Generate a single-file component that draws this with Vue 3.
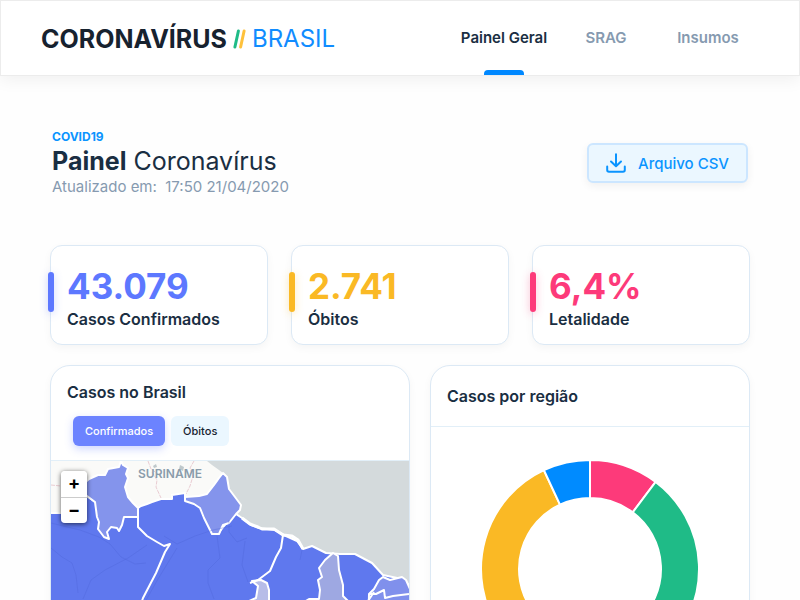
<script setup>
import { ref, computed } from 'vue'

const tabs = ['Painel Geral', 'SRAG', 'Insumos']
const activeTab = ref('Painel Geral')

const stats = [
  { value: '43.079', label: 'Casos Confirmados', tone: 'indigo' },
  { value: '2.741', label: 'Óbitos', tone: 'amber' },
  { value: '6,4%', label: 'Letalidade', tone: 'pink' },
]

const layers = ['Confirmados', 'Óbitos']
const activeLayer = ref('Confirmados')

// Start and end angles in degrees, clockwise from the top.
const regions = [
  { color: '#fd3a7a', from: 0, to: 37 },
  { color: '#1fbb87', from: 37, to: 138 },
  { color: '#fab925', from: 138, to: 335 },
  { color: '#008bff', from: 335, to: 360 },
]

const point = (radius, angle) => {
  const rad = (angle * Math.PI) / 180
  return `${(110 + radius * Math.sin(rad)).toFixed(2)} ${(110 - radius * Math.cos(rad)).toFixed(2)}`
}

const slices = computed(() =>
  regions.map(({ color, from, to }) => {
    const large = to - from > 180 ? 1 : 0
    return {
      color,
      d: `M${point(109, from)}A109 109 0 ${large} 1 ${point(109, to)}L${point(71, to)}A71 71 0 ${large} 0 ${point(71, from)}Z`,
    }
  }),
)
</script>

<template>
  <div class="page">
    <header class="topbar">
      <a class="logo" href="#">
        <span class="logo-strong">CORONAVÍRUS</span>
        <svg class="logo-mark" viewBox="0 0 13 20" aria-hidden="true">
          <path d="M5.4 2 1.9 18" stroke="#1fbb87" />
          <path d="M11.1 2 7.6 18" stroke="#fec13b" />
        </svg>
        <span class="logo-light">BRASIL</span>
      </a>
      <nav class="tabs">
        <a
          v-for="tab in tabs"
          :key="tab"
          href="#"
          class="tab"
          :class="{ active: tab === activeTab }"
          @click.prevent="activeTab = tab"
        >{{ tab }}</a>
      </nav>
    </header>

    <main class="content">
      <section class="heading">
        <div>
          <p class="eyebrow">COVID19</p>
          <h1 class="title"><strong>Painel</strong> Coronavírus</h1>
          <p class="updated">Atualizado em:&nbsp; 17:50 21/04/2020</p>
        </div>
        <button class="download" type="button">
          <svg viewBox="0 0 20 20" aria-hidden="true">
            <path d="M10 1.200V13M5 8.500 10 13.300 15 8.500M1.200 13.500V17Q1.200 18.700 3 18.700H17Q18.800 18.700 18.800 17V13.500" />
          </svg>
          <span>Arquivo CSV</span>
        </button>
      </section>

      <section class="stats">
        <article v-for="stat in stats" :key="stat.label" class="stat" :class="stat.tone">
          <strong class="stat-value">{{ stat.value }}</strong>
          <span class="stat-label">{{ stat.label }}</span>
        </article>
      </section>

      <section class="panels">
        <article class="panel">
          <div class="map-head">
            <h2>Casos no Brasil</h2>
            <div class="layers">
              <button
                v-for="layer in layers"
                :key="layer"
                type="button"
                class="layer"
                :class="{ active: layer === activeLayer }"
                @click="activeLayer = layer"
              >{{ layer }}</button>
            </div>
          </div>
          <div class="map">
            <svg class="map-art" viewBox="51 461 358 260" preserveAspectRatio="xMidYMid slice" aria-hidden="true">
              <rect x="51" y="461" width="358" height="260" fill="#d4dadc" />
              <path fill="#fafaf8" d="M51 461H207L212 465 219 470 223 473 221 520 130 530 51 525Z" />
              <g class="roads">
                <path d="M51 485 61 486M148 461 151 469 158 474M152 472 157 480 156 487 161 498M194 461 190 468 193 476 190 486 186 494" />
              </g>
              <path fill="#bfc8cb" d="M153 466l3-2 1 3-3 1zM180 465l4 2-1 4-4-2z" />
              <g class="states">
                <path fill="#5f78ee" d="M47 513H61L68 499 87 496 95 502 138 508 141 506 147 504 152 502 161 499 172 499V495L185 493V500L199 504 205 516 211 530 219 532 228 521 236 514 242 518 251 525 259 528 275 530 286 536 297 541 303 549 312 546 326 553 340 554 355 554 372 563 383 575 402 579 413 588V725H47Z" />
                <path fill="#8494ec" d="M81 486 89 479 98 475 105 475 108 469 119 467 121 461 123 465 128 468 126 474 128 478 125 487 128 497 133 503 138 508V517H124L122 525 119 531 117 528 111 527 107 532 109 539 104 537 98 529 99 522 97 517 95 502 87 496 80 491Z" />
                <path fill="#8494ec" d="M185 497 199 496 207 494 214 485 219 478 223 473 227 477 229 489 235 497 241 505 240 510 236 514 229 523 223 525 219 534H212L204 518 200 508 194 504 185 501Z" />
                <path fill="#9ea8e2" d="M333 553 338 556 339 570 343 585 343 596 348 601 354 610V725H301L304 602 309 599H319L320 590 318 580 322 577 319 568 325 560Z" />
                <path fill="#b7bde8" d="M252 581 261 580 267 583 269 590V602L262 622H240L247 602 256 598 258 586Z" />
                <path fill="#8090ec" d="M383 577 390 580 402 577 406 580 413 596V725H366L369 594 374 589 379 580Z" />
                <path class="line" d="M138 517V527L147 536 157 542 164 546 170 544 165 552 156 573 143 598 136 618" />
                <path class="line" d="M283 535 281 548 276 557 270 571 258 580 250 583" />
                <path class="line" d="M369 594 376 594 384 590 385 598 393 596 409 594M366 604 374 592" />
                <path class="line coast" d="M242 518 250 524 258 527 262 529 274 529 283 535 292 536 298 540 303 549" />
              </g>
              <g class="rivers">
                <path d="M51 523 63 526 80 530 99 537 110 544 121 557 135 564 146 563M164 536 177 544 195 536 213 530 232 526M229 520V532L237 542 247 538M217 536 220 558 208 570 208 583 214 599M51 548 62 557 72 563 76 575 78 593M147 545 128 558 105 570 91 580 83 599M245 541 242 565 248 582M302 550 300 560M177 548 158 579 145 602" />
              </g>
              <text class="country" x="170" y="478" text-anchor="middle">SURINAME</text>
            </svg>
            <div class="zoom">
              <button type="button" aria-label="Aproximar">+</button>
              <button type="button" aria-label="Afastar">−</button>
            </div>
          </div>
        </article>

        <article class="panel">
          <div class="region-head"><h2>Casos por região</h2></div>
          <div class="chart">
            <svg viewBox="0 0 220 220" role="img" aria-label="Casos por região">
              <path v-for="slice in slices" :key="slice.color" :d="slice.d" :fill="slice.color" stroke="#fff" stroke-width="2" />
            </svg>
          </div>
        </article>
      </section>
    </main>
  </div>
</template>

<style>
html {
  scrollbar-width: none;
}

body {
  background: #fefefe;
}
</style>

<style scoped>
.page,
.page button {
  font-family: Inter, "Liberation Sans", sans-serif;
}

.page {
  color: #1a2e42;
}

.page * {
  box-sizing: border-box;
}

.topbar {
  display: flex;
  align-items: center;
  justify-content: space-between;
  height: 76px;
  padding: 0 40px;
  background: #fff;
  border: 1px solid #ececec;
  box-shadow: 0 4px 16px rgba(0, 0, 0, 0.06);
}

.logo {
  display: flex;
  align-items: center;
  gap: 6px;
  padding-top: 2px;
  line-height: 32px;
  text-decoration: none;
}

.logo-strong {
  color: #17222f;
  font-size: 25px;
  font-weight: 700;
}

.logo-mark {
  width: 13px;
  height: 20px;
  fill: none;
  stroke-width: 3;
  stroke-linecap: round;
}

.logo-light {
  color: #118cff;
  font-size: 24px;
  font-weight: 400;
}

.tabs {
  display: flex;
  align-self: stretch;
}

.tab {
  position: relative;
  display: flex;
  align-items: center;
  justify-content: center;
  width: 102px;
  padding-bottom: 2px;
  color: #869ab0;
  font-size: 15px;
  font-weight: 600;
  text-decoration: none;
  white-space: nowrap;
}

.tab.active {
  color: #1a2e42;
}

.tab.active::after {
  content: "";
  position: absolute;
  bottom: 0;
  left: 50%;
  width: 40px;
  height: 5px;
  margin-left: -20px;
  background: #0088ff;
  border-radius: 4px 4px 0 0;
}

.content {
  padding: 53px 50px 40px;
}

.heading {
  display: flex;
  align-items: center;
  justify-content: space-between;
  padding: 0 2px;
}

.eyebrow,
.title,
.updated {
  margin: 0;
}

.eyebrow {
  color: #0a94ff;
  font-size: 12px;
  font-weight: 700;
  line-height: 16px;
}

.title {
  font-size: 25px;
  font-weight: 400;
  line-height: 32px;
}

.title strong {
  font-weight: 700;
}

.updated {
  color: #869ab0;
  font-size: 15px;
  line-height: 20px;
}

.download {
  display: flex;
  align-items: center;
  gap: 12px;
  height: 40px;
  padding: 0 17px;
  color: #0a94ff;
  font-size: 15px;
  font-weight: 500;
  background: #ebf7ff;
  border: 2px solid #cce6ff;
  border-radius: 6px;
  box-shadow: 0 3px 8px rgba(0, 0, 0, 0.06);
}

.download svg {
  width: 20px;
  height: 20px;
  fill: none;
  stroke: currentColor;
  stroke-width: 2;
  stroke-linecap: round;
  stroke-linejoin: round;
}

.stats {
  display: grid;
  grid-template-columns: repeat(3, 1fr);
  gap: 23px;
  margin-top: 48px;
}

.stat {
  position: relative;
  display: flex;
  flex-direction: column;
  height: 100px;
  padding: 18px 16px;
  background: #fff;
  border: 1px solid #dce9f5;
  border-radius: 12px;
  box-shadow: 0 3px 8px rgba(0, 0, 0, 0.04);
}

.stat::before {
  content: "";
  position: absolute;
  top: 26px;
  left: -3px;
  width: 6px;
  height: 40px;
  background: var(--tone);
  border-radius: 3px;
  box-shadow: 0 2px 8px var(--glow);
}

.indigo {
  --tone: #5d78ff;
  --glow: rgba(93, 120, 255, 0.3);
}

.amber {
  --tone: #fab925;
  --glow: rgba(250, 185, 37, 0.3);
}

.pink {
  --tone: #fd3a7a;
  --glow: rgba(253, 58, 122, 0.3);
}

.stat-value {
  color: var(--tone);
  font-size: 35px;
  font-weight: 700;
  line-height: 44px;
}

.stat-label {
  font-size: 16px;
  font-weight: 600;
  line-height: 22px;
}

.panels {
  display: grid;
  grid-template-columns: 9fr 8fr;
  gap: 20px;
  margin-top: 20px;
}

.panel {
  min-width: 0;
  overflow: hidden;
  background: #fff;
  border: 1px solid #dce9f5;
  border-radius: 20px;
  box-shadow: 0 3px 8px rgba(0, 0, 0, 0.04);
}

.panel h2 {
  margin: 0;
  font-size: 16px;
  font-weight: 600;
  line-height: 20px;
}

.map-head {
  padding: 16px 16px 14px;
  border-bottom: 1px solid #e2eff8;
}

.layers {
  display: flex;
  gap: 6px;
  padding: 14px 6px 0;
}

.layer {
  height: 30px;
  padding: 0 12px;
  color: #17222f;
  font-size: 11px;
  font-weight: 500;
  background: #ebf7ff;
  border: 0;
  border-radius: 6px;
}

.layer.active {
  color: #fff;
  background: #6c83ff;
  box-shadow: 0 3px 8px rgba(93, 120, 255, 0.3);
}

.map {
  position: relative;
}

.map-art {
  display: block;
  width: 100%;
  height: 260px;
}

.states path {
  stroke: #fff;
  stroke-width: 2;
  stroke-linejoin: round;
}

.states .line {
  fill: none;
}

.states .coast {
  stroke-width: 3;
}

.rivers path {
  fill: none;
  stroke: #4c65d8;
  stroke-opacity: 0.35;
}

.roads path {
  fill: none;
  stroke: #e9ccd2;
  stroke-dasharray: 4 1;
}

.country {
  fill: #8a9cab;
  font-size: 12px;
  font-weight: 600;
}

.zoom {
  position: absolute;
  top: 10px;
  left: 10px;
  display: flex;
  flex-direction: column;
  width: 26px;
  border-radius: 4px;
  box-shadow: 0 1px 5px rgba(0, 0, 0, 0.65);
  overflow: hidden;
}

.zoom button {
  height: 26px;
  padding: 0 0 2px;
  color: #000;
  font-size: 18px;
  font-weight: 700;
  line-height: 24px;
  background: #fff;
  border: 0;
}

.zoom button + button {
  border-top: 1px solid #ccc;
}

.region-head {
  padding: 20px 16px;
  border-bottom: 1px solid #e2eff8;
}

.chart {
  display: flex;
  justify-content: center;
  padding: 32px 16px;
}

.chart svg {
  width: 220px;
  height: 220px;
}
</style>
